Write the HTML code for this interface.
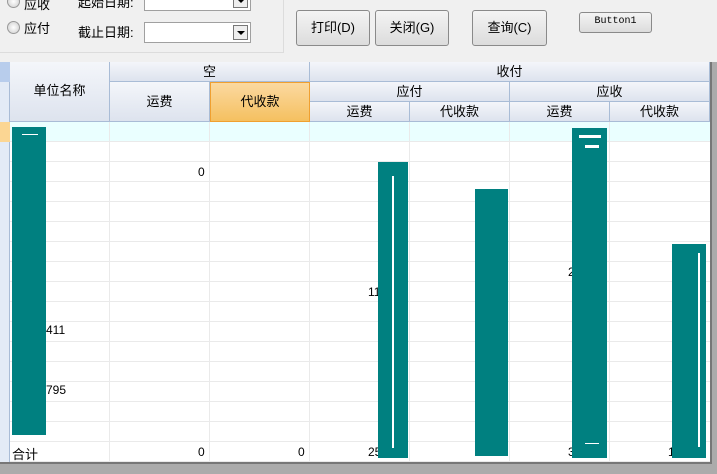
<!DOCTYPE html><html><head><meta charset="utf-8"><style>
*{margin:0;padding:0;box-sizing:border-box}
body{width:717px;height:474px;overflow:hidden;background:#ababab;font-family:"Liberation Sans","Noto Sans CJK SC",sans-serif;font-size:12px;color:#000;position:relative}
.a{position:absolute}
.top{left:0;top:0;width:717px;height:62px;background:#f0f0f0}
.btn{position:absolute;border:1px solid #8a8a8a;border-radius:3px;background:linear-gradient(#f4f4f4,#dcdcdc);text-align:center;font-size:13px}
.combo{position:absolute;width:107px;height:21px;border:1px solid #a0a0a0;background:#fff}
.combo i{position:absolute;right:2px;top:2px;width:15px;height:15px;border:1px solid #777;background:#eee}
.combo i:after{content:"";position:absolute;left:3px;top:5px;border-left:4px solid transparent;border-right:4px solid transparent;border-top:4px solid #000}
.radio{position:absolute;width:13px;height:13px;border-radius:50%;border:1px solid #999;background:radial-gradient(#fff,#ccc)}
.h{position:absolute;background:linear-gradient(#f4f6fa,#dde3ee);border-right:1px solid #a9bcd6;border-bottom:1px solid #a9bcd6;text-align:center;font-size:13px}
.grid{left:10px;top:122px;width:700px;height:340px;background:#fff}
.row{position:absolute;left:0;width:700px;height:20px;border-bottom:1px solid #eaeaea}
.vl{position:absolute;top:0;width:1px;height:340px;background:#eaeaea}
.t{background:#008080;position:absolute}
.w{background:#fff;position:absolute}
</style></head><body>
<div class="a top"></div>
<div class="a" style="left:0;top:52px;width:284px;height:1px;background:#dcdcdc"></div>
<div class="a" style="left:283px;top:0;width:1px;height:53px;background:#dcdcdc"></div>
<div class="radio" style="left:7px;top:-5px"></div><div class="a" style="left:24px;top:-6px;font-size:13px">应收</div>
<div class="radio" style="left:7px;top:21px"></div><div class="a" style="left:24px;top:18px;font-size:13px">应付</div>
<div class="a" style="left:78px;top:-8px;font-size:13px">起始日期:</div>
<div class="a" style="left:78px;top:22px;font-size:13px">截止日期:</div>
<div class="combo" style="left:144px;top:-10px"><i></i></div>
<div class="combo" style="left:144px;top:22px"><i></i></div>
<div class="btn" style="left:296px;top:10px;width:74px;height:36px;line-height:34px">打印(D)</div>
<div class="btn" style="left:375px;top:10px;width:74px;height:36px;line-height:34px">关闭(G)</div>
<div class="btn" style="left:472px;top:10px;width:75px;height:36px;line-height:34px">查询(C)</div>
<div class="btn" style="left:579px;top:12px;width:73px;height:21px;line-height:18px;font-size:10px;font-family:'Liberation Mono',monospace">Button1</div>
<div class="a" style="left:0;top:62px;width:10px;height:400px;background:#e3ebf6;border-right:1px solid #a9bcd6"></div>
<div class="a" style="left:0;top:62px;width:10px;height:20px;background:#b8cdec"></div>
<div class="a" style="left:0;top:122px;width:10px;height:20px;background:#fbd693"></div>
<div class="h" style="left:10px;top:62px;width:100px;height:60px;line-height:58px">单位名称</div>
<div class="h" style="left:110px;top:62px;width:200px;height:20px;line-height:20px">空</div>
<div class="h" style="left:110px;top:82px;width:100px;height:40px;line-height:40px">运费</div>
<div class="h" style="left:210px;top:82px;width:100px;height:40px;line-height:38px;background:linear-gradient(#fbd9a0,#f5c060);border:1px solid #f0a030">代收款</div>
<div class="h" style="left:310px;top:62px;width:400px;height:20px;line-height:20px">收付</div>
<div class="h" style="left:310px;top:82px;width:200px;height:20px;line-height:20px">应付</div>
<div class="h" style="left:510px;top:82px;width:200px;height:20px;line-height:20px">应收</div>
<div class="h" style="left:310px;top:102px;width:100px;height:20px;line-height:20px">运费</div>
<div class="h" style="left:410px;top:102px;width:100px;height:20px;line-height:20px">代收款</div>
<div class="h" style="left:510px;top:102px;width:100px;height:20px;line-height:20px">运费</div>
<div class="h" style="left:610px;top:102px;width:100px;height:20px;line-height:20px">代收款</div>
<div class="a" style="left:710px;top:62px;width:2px;height:402px;background:#777"></div>
<div class="a grid">
<div class="row" style="top:0;background:#eaffff"></div>
<div class="row" style="top:20px"></div><div class="row" style="top:40px"></div><div class="row" style="top:60px"></div><div class="row" style="top:80px"></div><div class="row" style="top:100px"></div><div class="row" style="top:120px"></div><div class="row" style="top:140px"></div><div class="row" style="top:160px"></div><div class="row" style="top:180px"></div><div class="row" style="top:200px"></div><div class="row" style="top:220px"></div><div class="row" style="top:240px"></div><div class="row" style="top:260px"></div><div class="row" style="top:280px"></div><div class="row" style="top:300px"></div><div class="row" style="top:320px"></div>
<div class="vl" style="left:99px"></div><div class="vl" style="left:199px"></div><div class="vl" style="left:299px"></div><div class="vl" style="left:399px"></div><div class="vl" style="left:499px"></div><div class="vl" style="left:599px"></div>
</div>
<div class="a" style="left:0;top:462px;width:712px;height:2px;background:#777"></div>
<div class="a" style="left:198px;top:165px">0</div>
<div class="a" style="left:46px;top:323px">411</div>
<div class="a" style="left:46px;top:383px">795</div>
<div class="a" style="left:12px;top:444px;font-size:13px">合计</div>
<div class="a" style="left:198px;top:445px">0</div>
<div class="a" style="left:298px;top:445px">0</div>
<div class="a" style="left:368px;top:445px">25</div>
<div class="a" style="left:568px;top:445px">3</div>
<div class="a" style="left:668px;top:445px">1</div>
<div class="a" style="left:368px;top:285px">11</div>
<div class="a" style="left:568px;top:265px">2</div>
<div class="t" style="left:12px;top:127px;width:34px;height:308px"></div>
<div class="w" style="left:22px;top:134px;width:16px;height:1px"></div>
<div class="t" style="left:378px;top:162px;width:30px;height:296px"></div>
<div class="w" style="left:392px;top:176px;width:2px;height:272px"></div>
<div class="t" style="left:475px;top:189px;width:33px;height:267px"></div>
<div class="t" style="left:572px;top:128px;width:35px;height:330px"></div>
<div class="w" style="left:579px;top:135px;width:22px;height:3px"></div>
<div class="w" style="left:585px;top:145px;width:14px;height:3px"></div>
<div class="w" style="left:585px;top:443px;width:14px;height:1px"></div>
<div class="t" style="left:672px;top:244px;width:34px;height:214px"></div>
<div class="w" style="left:698px;top:253px;width:2px;height:194px"></div>
</body></html>
